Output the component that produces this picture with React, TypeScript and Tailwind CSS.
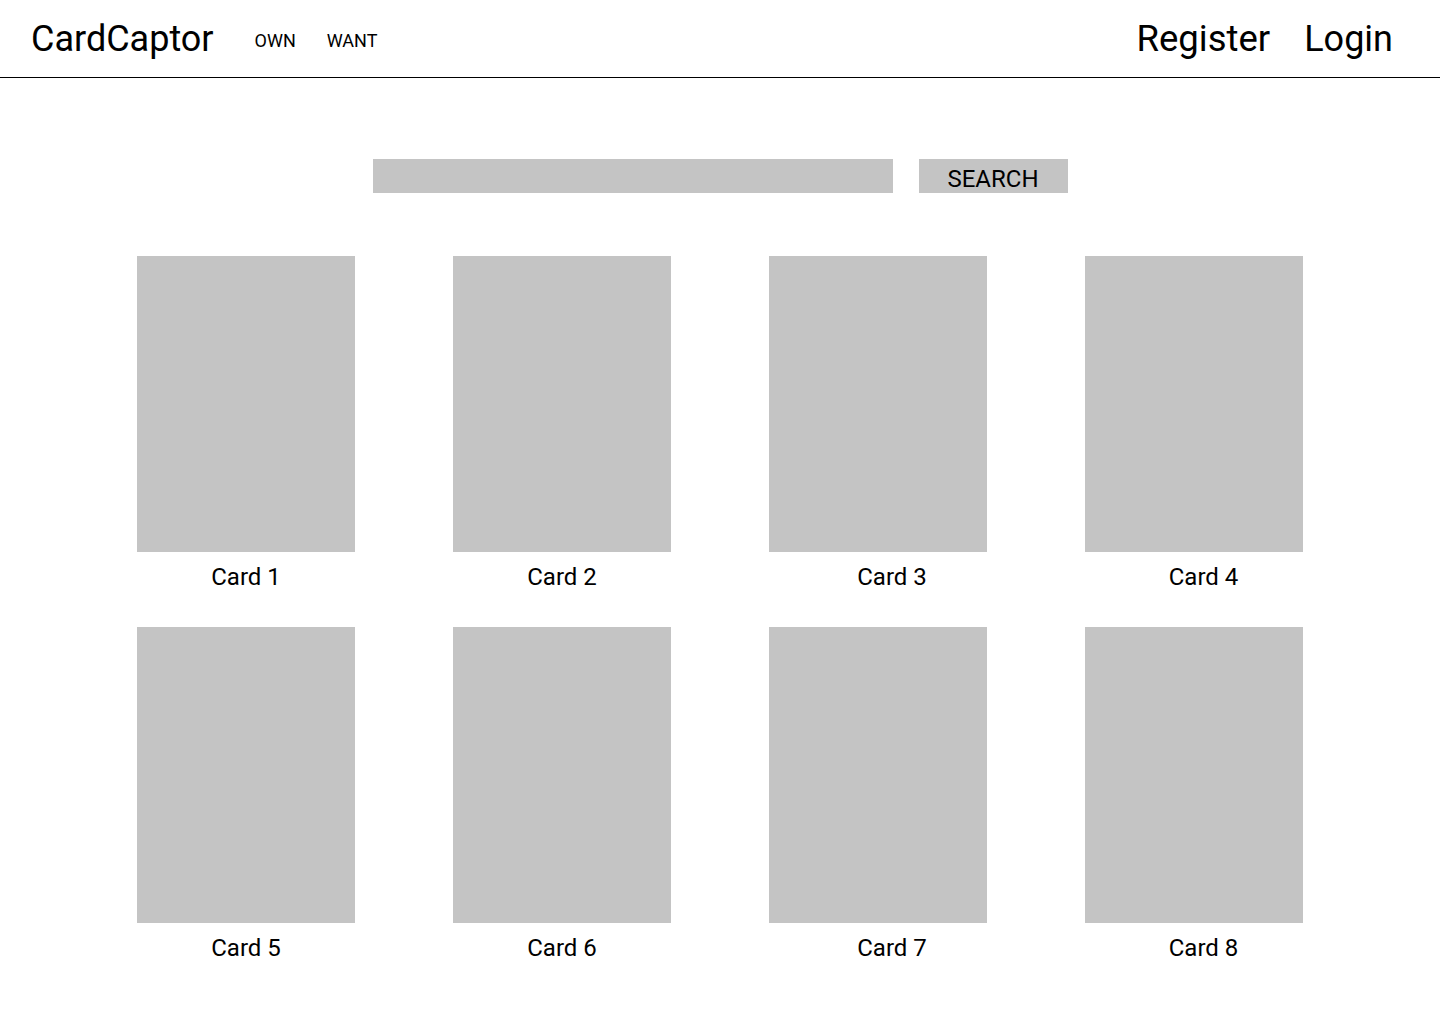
const cards = [
  { name: "Card 1", shift: "pl-0" },
  { name: "Card 2", shift: "pl-0" },
  { name: "Card 3", shift: "pl-[28px]" },
  { name: "Card 4", shift: "pl-[19px]" },
  { name: "Card 5", shift: "pl-0" },
  { name: "Card 6", shift: "pl-0" },
  { name: "Card 7", shift: "pl-[28px]" },
  { name: "Card 8", shift: "pl-[19px]" },
];

export default function App() {
  return (
    <div className="min-h-screen bg-white text-black" style={{ fontFamily: "Roboto, 'Liberation Sans', sans-serif" }}>
      {/* Header */}
      <header className="flex h-[78px] items-center justify-between border-b border-black pl-[31px] pr-[47px]">
        <div className="flex items-center">
          <span className="text-[36px] leading-[42px]">CardCaptor</span>
          <nav className="ml-[41px] mt-[5px] flex gap-[31px] text-[18px] leading-[20px]">
            <a>OWN</a>
            <a>WANT</a>
          </nav>
        </div>
        <div className="flex items-center gap-[34px] text-[36px] leading-[42px]">
          <a className="text-[36.5px]">Register</a>
          <a>Login</a>
        </div>
      </header>

      {/* Search */}
      <div className="mt-[81px] flex justify-center gap-[26px]">
        <div className="h-[34px] w-[520px] bg-[#c4c4c4]" />
        <button className="flex h-[34px] w-[149px] items-start justify-center bg-[#c4c4c4] pt-[6px] text-[24px] leading-[28px]">
          SEARCH
        </button>
      </div>

      {/* Cards */}
      <div className="mx-auto mt-[63px] grid w-[1166px] grid-cols-4 gap-x-[98px] gap-y-[36px]">
        {cards.map((c) => (
          <div key={c.name} className="flex flex-col">
            <div className="h-[296px] w-[218px] bg-[#c4c4c4]" />
            <div className={`mt-[11px] text-center text-[24px] leading-[28px] ${c.shift}`}>{c.name}</div>
          </div>
        ))}
      </div>
    </div>
  );
}
